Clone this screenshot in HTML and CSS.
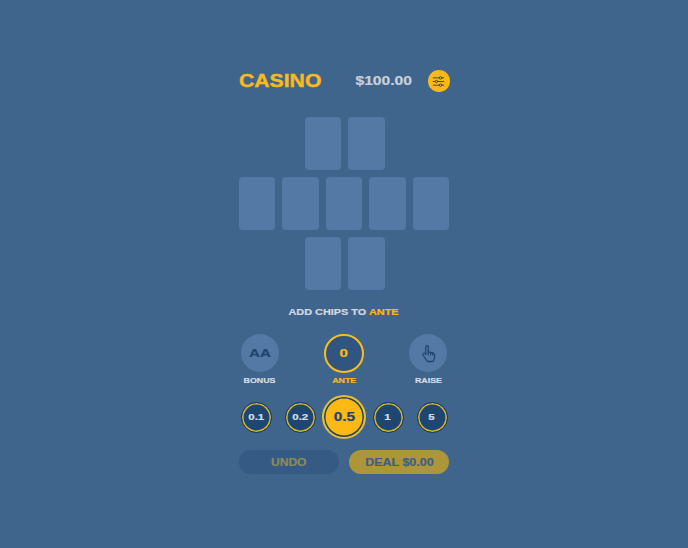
FILE: index.html
```html
<!DOCTYPE html>
<html lang="en">
<head>
<meta charset="utf-8">
<title>Casino</title>
<link rel="stylesheet" href="styles.css">
</head>
<body>
<main class="game">
  <header class="top">
    <h1 class="logo">CASINO</h1>
    <div class="balance"><span class="wide">$100.00</span></div>
    <button class="settings" aria-label="Settings">
      <svg viewBox="0 0 16 16" width="13" height="13" fill="none" stroke="#1d4670" stroke-width="1.100" stroke-linecap="round">
        <path d="M1.500 3.500h13M1.500 8h13M1.500 12.500h13"/>
        <circle cx="10.500" cy="3.500" r="1.500" fill="#fcb813"/>
        <circle cx="5.500" cy="8" r="1.500" fill="#fcb813"/>
        <circle cx="10.500" cy="12.500" r="1.500" fill="#fcb813"/>
      </svg>
    </button>
  </header>
  <section class="table">
    <div class="row row-short"><div class="card"></div><div class="card"></div></div>
    <div class="row"><div class="card"></div><div class="card"></div><div class="card"></div><div class="card"></div><div class="card"></div></div>
    <div class="row row-short"><div class="card"></div><div class="card"></div></div>
  </section>
  <p class="prompt"><span class="wide">ADD CHIPS TO <span class="gold">ANTE</span></span></p>
  <section class="bets">
    <div class="bet">
      <div class="spot"><span class="aa">AA</span></div>
      <span class="bet-label">BONUS</span>
    </div>
    <div class="bet">
      <div class="spot spot-active"><span class="zero">0</span></div>
      <span class="bet-label bet-label-active">ANTE</span>
    </div>
    <div class="bet">
      <div class="spot">
        <svg viewBox="0 0 24 24" width="19" height="21" fill="none" stroke="#1d4670" stroke-width="1.600" stroke-linejoin="round" stroke-linecap="round">
          <path d="M8.500 13V3.600a1.600 1.600 0 0 1 3.200 0V10l5.600 1.300c1.500.4 2.400 1.400 2.400 3v2.200c0 1.400-.4 2.500-1 3.600l-.8 2H10.500l-1-1.600-4.400-6.300c-.5-.8-.4-1.700.3-2.200.7-.5 1.600-.4 2.200.3z"/>
          <path d="M11.700 10v3.500M14.700 10.700v3M17.500 11.500v2.500"/>
        </svg>
      </div>
      <span class="bet-label">RAISE</span>
    </div>
  </section>
  <section class="chips">
    <button class="chip"><span>0.1</span></button>
    <button class="chip"><span>0.2</span></button>
    <button class="chip chip-selected"><span>0.5</span></button>
    <button class="chip"><span>1</span></button>
    <button class="chip"><span>5</span></button>
  </section>
  <section class="actions">
    <button class="action undo"><span class="wide">UNDO</span></button>
    <button class="action deal"><span class="wide wide-deal">DEAL $0.00</span></button>
  </section>
</main>
</body>
</html>
```
FILE: styles.css
```css
* { box-sizing: border-box; }
html, body { height: 100%; }
body {
  margin: 0;
  background: #3f658c;
  font-family: "Liberation Sans", Arial, sans-serif;
  font-weight: 700;
  color: #d6dbe4;
  -webkit-text-stroke: 0.2px;
}
.wide {
  display: inline-block;
  white-space: nowrap;
  transform: scaleX(1.21);
}
.wide-deal { transform: scaleX(1.25); }
.game {
  width: 210px;
  margin: 0 auto;
  padding-top: 70px;
  display: flex;
  flex-direction: column;
}
.top {
  display: flex;
  align-items: center;
  height: 22px;
}
.logo {
  margin: 0;
  flex: 1;
  font-size: 17.500px;
  line-height: 22px;
  font-weight: 700;
  color: #fab91c;
  -webkit-text-stroke: 0.4px;
  transform: scaleX(1.21);
  transform-origin: left center;
}
.balance {
  font-size: 12px;
  margin-right: 22.500px;
  color: #c9cfda;
}
.balance .wide { transform: scaleX(1.3); }
.settings {
  width: 21.500px;
  height: 21.500px;
  margin-right: -0.500px;
  padding: 0;
  border: 0;
  border-radius: 50%;
  background: #fcb813;
  display: flex;
  align-items: center;
  justify-content: center;
}
.table {
  margin-top: 25px;
  display: flex;
  flex-direction: column;
  gap: 6.500px;
}
.row {
  display: flex;
  justify-content: center;
  gap: 7px;
}
.row-short { padding-left: 1.500px; }
.card {
  width: 36.500px;
  height: 53.300px;
  border-radius: 4px;
  background: #5379a5;
}
.prompt {
  margin: 16.500px 0 0;
  text-align: center;
  font-size: 9px;
  line-height: 12px;
  color: #d3d8e1;
}
.gold { color: #fcb813; }
.bets {
  margin-top: 16px;
  display: flex;
  justify-content: space-between;
  padding: 0 2px;
}
.bet {
  width: 38px;
  display: flex;
  flex-direction: column;
  align-items: center;
}
.spot {
  width: 38px;
  height: 38px;
  border-radius: 50%;
  background: #5379a5;
  display: flex;
  align-items: center;
  justify-content: center;
}
.spot-active {
  width: 39.500px;
  height: 39.500px;
  flex: none;
  margin-top: -0.500px;
  margin-bottom: -1px;
  background: #2f5580;
  border: 2.500px solid #fbbd1e;
}
.aa {
  font-size: 11px;
  color: #1d4670;
  transform: scaleX(1.38);
}
.zero {
  font-size: 10px;
  color: #fcb813;
  transform: scaleX(1.5);
}
.bet-label {
  margin-top: 3px;
  font-size: 7.500px;
  line-height: 11px;
  white-space: nowrap;
  color: #d8dde5;
  transform: scaleX(1.18);
}
.bet-label-active { color: #fcb813; }
.chips {
  margin: 9px -5px 0;
  display: grid;
  grid-template-columns: repeat(5, 44px);
  justify-content: center;
  justify-items: center;
  align-items: center;
  height: 44px;
}
.chip {
  width: 31px;
  height: 31px;
  padding: 0;
  border-radius: 50%;
  border: 1px solid #1f3c5e;
  background: #1d4670;
  box-shadow: inset 0 0 0 1.600px #d9b52f;
  color: #d6dbe4;
  font-family: inherit;
  font-weight: 700;
  font-size: 9px;
  -webkit-text-stroke: 0.2px;
  display: flex;
  align-items: center;
  justify-content: center;
}
.chip span { transform: scaleX(1.28); }
.chip-selected {
  width: 44px;
  height: 44px;
  background: #fcb813;
  border: 2px solid #e0bd3c;
  box-shadow: inset 0 0 0 1.500px #223f60;
  color: #1d4670;
  font-size: 12px;
}
.actions {
  margin-top: 11px;
  display: flex;
  gap: 10.500px;
}
.action {
  flex: 1;
  height: 24px;
  padding: 0;
  border: 0;
  border-radius: 12px;
  font-family: inherit;
  font-weight: 700;
  font-size: 10px;
  -webkit-text-stroke: 0.2px;
}
.undo { background: #355a83; color: #8c8a5e; }
.deal { background: #ad9539; color: #3f5f85; }
```
